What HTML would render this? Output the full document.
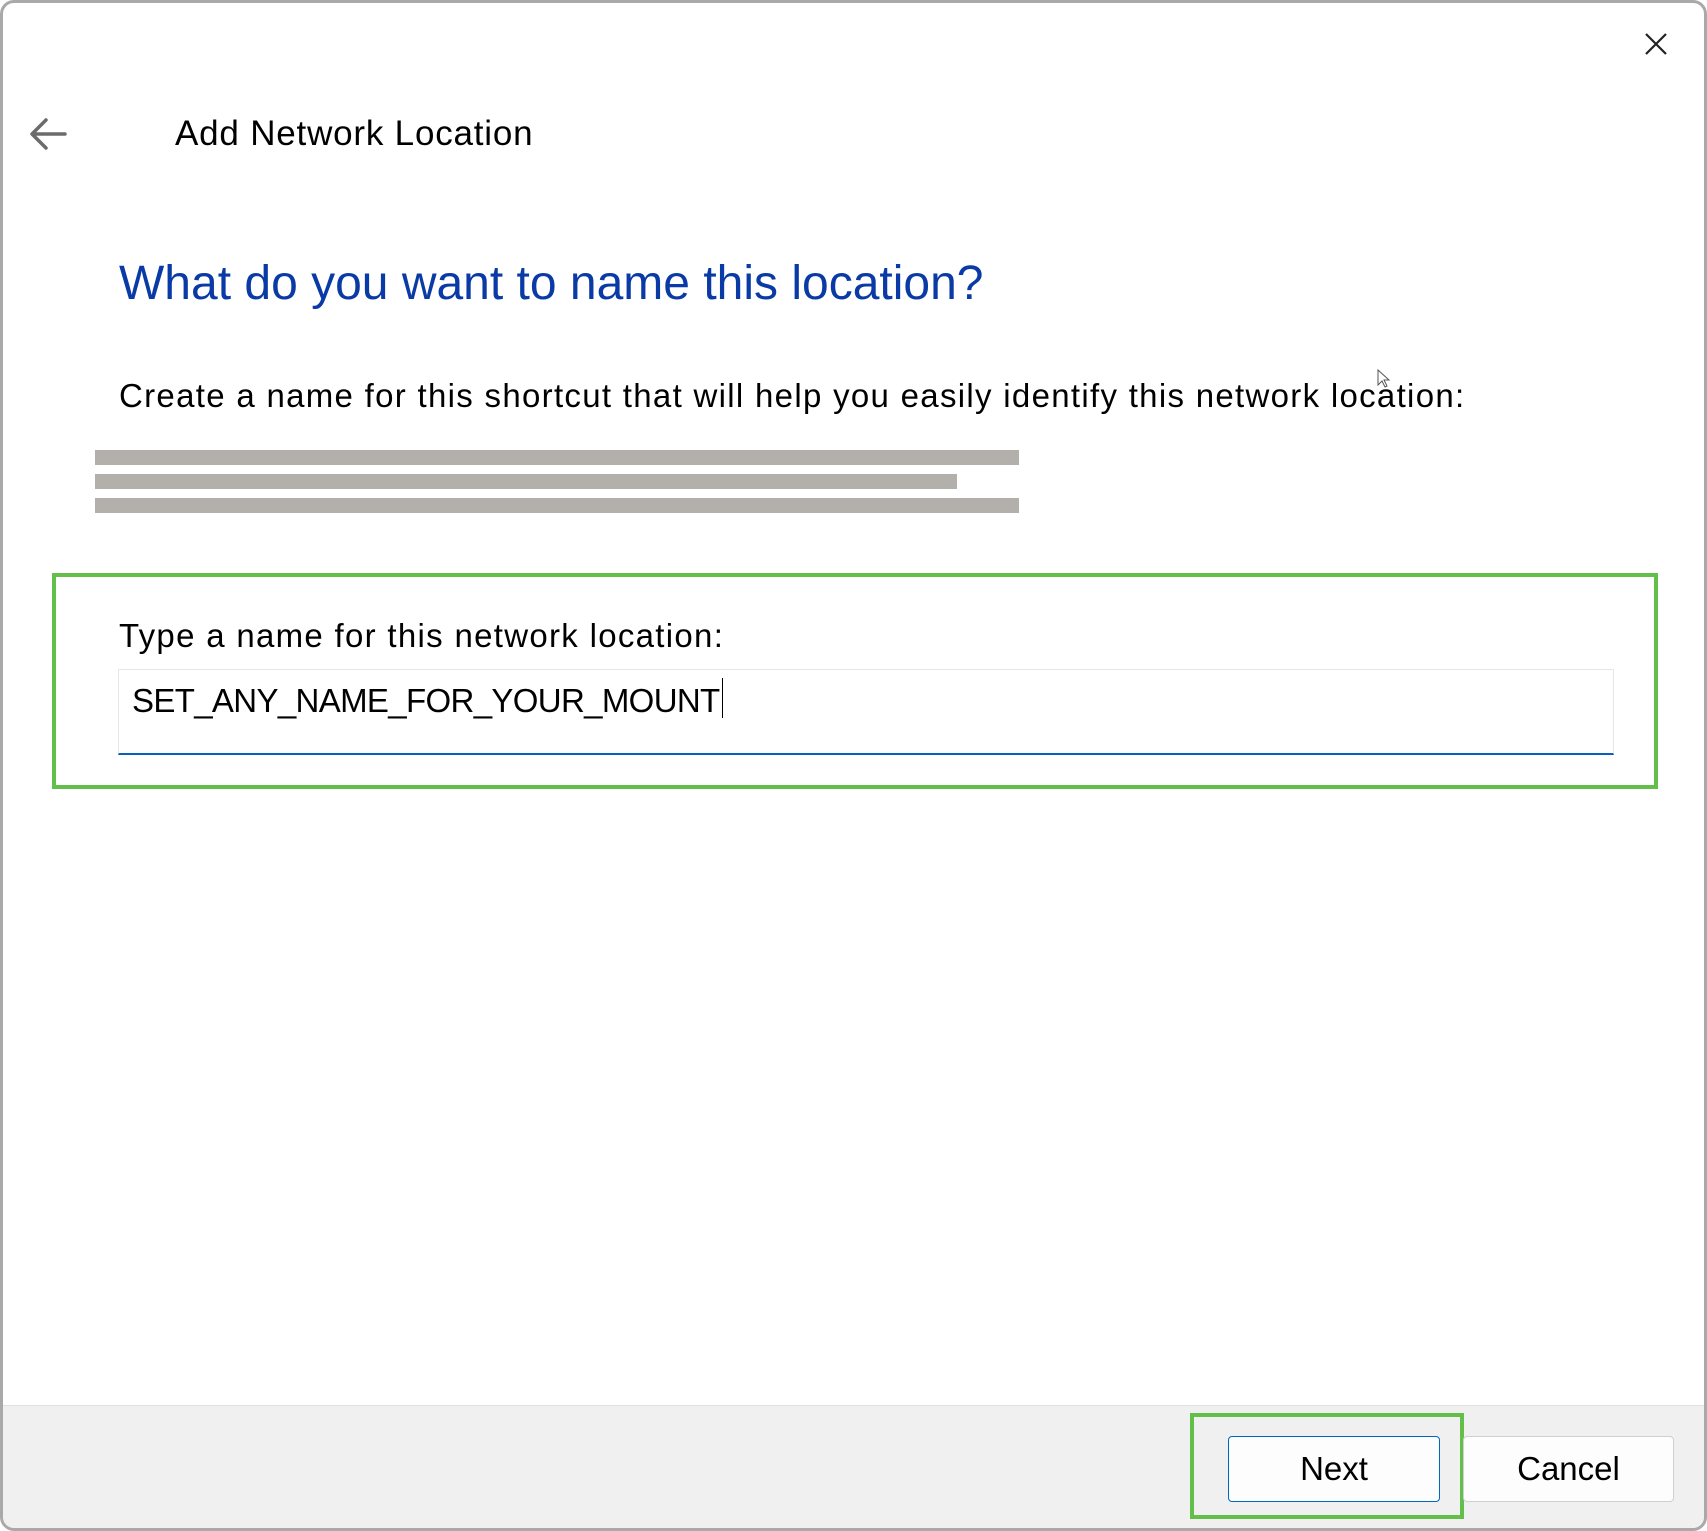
<!DOCTYPE html>
<html><head><meta charset="utf-8"><style>
*{margin:0;padding:0;box-sizing:border-box}
body{width:1707px;height:1531px;background:#fff;position:relative;overflow:hidden;font-family:"Liberation Sans",sans-serif;color:#000}
.win{position:absolute;left:0;top:0;width:1707px;height:1531px;border:3px solid #a9a9a9;border-radius:14px;background:#fff;overflow:hidden}
.abs{position:absolute;white-space:nowrap}
.bar{position:absolute;background:#b3b0ab}
.footer{position:absolute;left:0;top:1402px;width:1707px;height:130px;background:#f0f0f0;border-top:1px solid #e0e0e0}
.btn{position:absolute;top:1433px;height:66px;background:#fdfdfd;border-radius:4px;font-size:33px;display:flex;align-items:center;justify-content:center}
</style></head><body>
<div class="win">
<svg class="abs" style="left:1640px;top:28px" width="26" height="26" viewBox="0 0 26 26"><path d="M3 3L23 23M23 3L3 23" stroke="#222" stroke-width="2.2"/></svg>
<svg class="abs" style="left:25px;top:113px" width="40" height="36" viewBox="0 0 40 36"><path d="M37 18H5M18 4L4 18L18 32" stroke="#6b6b6b" stroke-width="3.5" fill="none" stroke-linecap="round" stroke-linejoin="round"/></svg>
<div class="abs" style="left:172px;top:111px;font-size:35px;letter-spacing:0.8px">Add Network Location</div>
<div class="abs" style="left:116px;top:253px;font-size:48px;color:#0a3aa5;">What do you want to name this location?</div>
<div class="abs" style="left:116px;top:374px;font-size:33px;letter-spacing:1.3px">Create a name for this shortcut that will help you easily identify this network location:</div>
<div class="bar" style="left:92px;top:447px;width:924px;height:15px"></div>
<div class="bar" style="left:92px;top:471px;width:862px;height:15px"></div>
<div class="bar" style="left:92px;top:495px;width:924px;height:15px"></div>
<div class="abs" style="left:49px;top:570px;width:1606px;height:216px;border:4.5px solid #62c04a"></div>
<div class="abs" style="left:116px;top:614px;font-size:33px;letter-spacing:1.3px">Type a name for this network location:</div>
<div class="abs" style="left:115px;top:666px;width:1496px;height:86px;border:1px solid #e6e6e6;border-bottom:2px solid #0a5fb8;background:#fff"></div>
<div class="abs" style="left:129px;top:675px;font-size:33px;letter-spacing:-0.65px">SET_ANY_NAME_FOR_YOUR_MOUNT<span style="display:inline-block;width:1.5px;height:40px;background:#000;vertical-align:-6px;margin-left:2px"></span></div>
<svg class="abs" style="left:1374px;top:366px" width="14" height="20" viewBox="0 0 14 20"><path d="M1 1V16L5 12L8 18L10 17L7 11H12Z" fill="#fff" stroke="#555" stroke-width="1"/></svg>
<div class="footer"></div>
<div class="abs" style="left:1187px;top:1410px;width:274px;height:106px;border:4.5px solid #62c04a"></div>
<div class="btn" style="left:1225px;width:212px;border:1.5px solid #0067c0">Next</div>
<div class="btn" style="left:1460px;width:211px;border:1px solid #d0d0d0">Cancel</div>
</div>
</body></html>
